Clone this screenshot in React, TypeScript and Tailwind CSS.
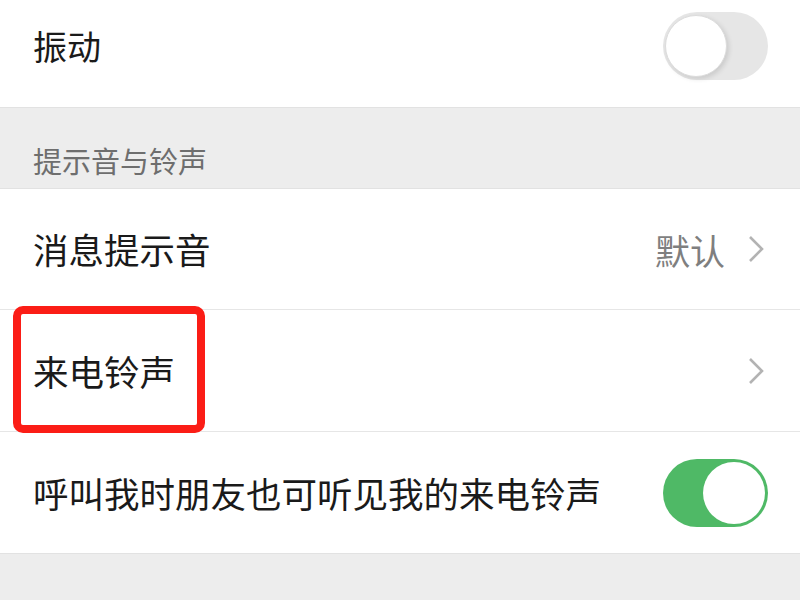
function Toggle({ on }: { on: boolean }) {
  return (
    <div
      className={
        on
          ? 'relative w-[105px] h-[68px] rounded-full bg-[#4fb966]'
          : 'relative w-[105px] h-[68px] rounded-full bg-[#e6e6e6]'
      }
    >
      <div
        className={
          on
            ? 'absolute right-[3px] top-[3px] w-[62px] h-[62px] rounded-full bg-white'
            : 'absolute left-[2px] top-[3px] w-[62px] h-[62px] rounded-full bg-white border border-[#dcdcdc] shadow-[2px_2px_5px_rgba(0,0,0,0.12)]'
        }
      />
    </div>
  )
}

function Chevron() {
  return (
    <svg width="16" height="28" viewBox="0 0 16 28" fill="none" className="text-[#b3b3b3]">
      <polyline points="2,2 14,14 2,26" stroke="currentColor" strokeWidth="2.6" strokeLinejoin="miter" />
    </svg>
  )
}

export default function App() {
  return (
    <div className="w-[800px] h-[600px] overflow-hidden bg-[#ededed] font-['Noto_Sans_CJK_SC','Noto_Sans',sans-serif] text-[#1a1a1a]">
      <div className="h-[107px] bg-white flex items-center justify-between pl-[33px] pr-[32px] pb-[15px]">
        <span className="text-[34px] leading-none">振动</span>
        <Toggle on={false} />
      </div>

      <div className="h-[82px] border-y border-[#e2e2e2] flex items-end pl-[33px] pb-[13px]">
        <span className="text-[29px] leading-none text-[#6e6e6e]">提示音与铃声</span>
      </div>

      <div className="bg-white">
        <div className="h-[121px] border-b border-[#e6e6e6] flex items-center justify-between pl-[33px] pr-[36px]">
          <span className="text-[35.5px] leading-none">消息提示音</span>
          <div className="flex items-center gap-[23px]">
            <span className="text-[35px] leading-none text-[#7f7f7f]">默认</span>
            <Chevron />
          </div>
        </div>

        <div className="relative h-[122px] border-b border-[#e6e6e6] flex items-center justify-between pl-[33px] pr-[36px]">
          <span className="text-[35.5px] leading-none">来电铃声</span>
          <Chevron />
          <div className="absolute left-[13px] -top-[4px] w-[192px] h-[127px] border-[8px] border-[#fb1d16] rounded-[10px]" />
        </div>

        <div className="h-[122px] border-b border-[#e2e2e2] flex items-center justify-between pl-[33px] pr-[32px]">
          <span className="text-[35.5px] leading-none">呼叫我时朋友也可听见我的来电铃声</span>
          <Toggle on={true} />
        </div>
      </div>
    </div>
  )
}
